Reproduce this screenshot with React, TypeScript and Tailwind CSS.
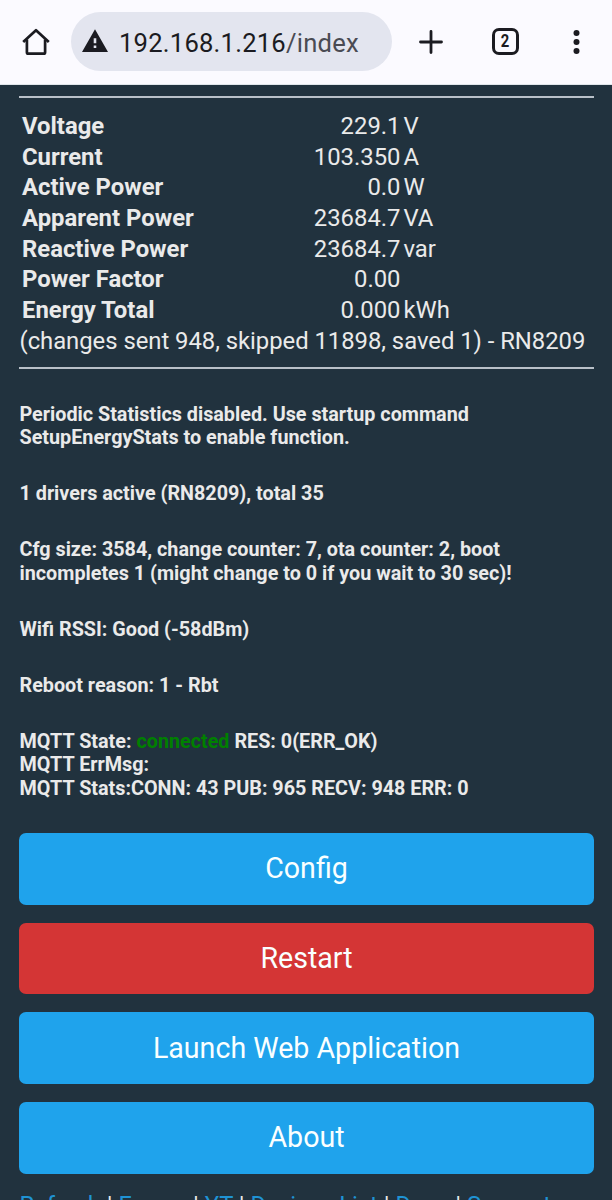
import { Fragment } from 'react';
import clsx from 'clsx';

const readings = [
  { label: 'Voltage', value: '229.1', unit: 'V' },
  { label: 'Current', value: '103.350', unit: 'A' },
  { label: 'Active Power', value: '0.0', unit: 'W' },
  { label: 'Apparent Power', value: '23684.7', unit: 'VA' },
  { label: 'Reactive Power', value: '23684.7', unit: 'var' },
  { label: 'Power Factor', value: '0.00', unit: '' },
  { label: 'Energy Total', value: '0.000', unit: 'kWh' },
];

const actions = [
  { label: 'Config', color: 'bg-[#1fa3ec]' },
  { label: 'Restart', color: 'bg-[#d43535]' },
  { label: 'Launch Web Application', color: 'bg-[#1fa3ec]' },
  { label: 'About', color: 'bg-[#1fa3ec]' },
];

const links = ['Refresh', 'Forum', 'YT', 'Devices List', 'Docs', 'Support'];

function BrowserBar() {
  return (
    <header className="flex h-[85px] shrink-0 items-center border-b border-[#dfe5ea] bg-[#fbfaff] text-[#1b1b21]">
      {/* Home */}
      <svg className="ml-[22px] h-7 w-7 shrink-0" viewBox="0 0 28 28" fill="none" stroke="currentColor" strokeWidth="2.7" strokeLinejoin="round">
        <path d="M1.2 14.1 L14 2.2 L26.8 14.1" />
        <path d="M4.9 11.5 V24.2 Q4.9 25.7 6.4 25.7 H21.6 Q23.1 25.7 23.1 24.2 V11.5" />
      </svg>

      {/* Address */}
      <div className="mb-[1px] ml-[21px] flex h-[59px] w-[321px] shrink-0 items-center rounded-full bg-[#e3e5ef] pl-[11px]">
        <svg className="mb-[2px] h-6 w-[26px] shrink-0" viewBox="0 0 26 24" fill="currentColor">
          <path fillRule="evenodd" d="M13 .2 L26 23 H0 Z M11.7 9.2 V14.3 H14.3 V9.2 Z M11.7 16.4 V19 H14.3 V16.4 Z" />
        </svg>
        <span className="mt-[2px] ml-[11px] text-[25.6px] leading-[30px] tracking-[0.22px] whitespace-nowrap">
          192.168.1.216<span className="text-[#4a4b53]">/index</span>
        </span>
      </div>

      {/* New tab */}
      <svg className="ml-[27px] h-6 w-6 shrink-0" viewBox="0 0 24 24" stroke="currentColor" strokeWidth="2.8" strokeLinecap="round">
        <path d="M12 1.5 V22.5 M1.5 12 H22.5" />
      </svg>

      {/* Open tabs */}
      <div className="mb-[1px] ml-[48.5px] flex h-[27px] w-[27px] shrink-0 items-center justify-center rounded-[7px] border-3 border-current text-[17.5px] leading-none font-bold">
        <span className="scale-x-[.85]">2</span>
      </div>

      {/* Menu */}
      <svg className="mb-[1px] ml-[54.5px] h-6 w-2 shrink-0" viewBox="0 0 8 24" fill="currentColor">
        <circle cx="3.5" cy="3" r="3" />
        <circle cx="3.5" cy="12" r="3" />
        <circle cx="3.5" cy="21" r="3" />
      </svg>
    </header>
  );
}

function Divider() {
  return <div className="h-[2px] bg-[#b9c0c8]" />;
}

export default function App() {
  return (
    <div className="flex h-[1200px] w-[612px] flex-col overflow-hidden bg-[#21323e] font-['Roboto',sans-serif] text-[#eaeaea]">
      <BrowserBar />

      <main className="pt-[11px] pr-[18px] pl-[19px]">
        <Divider />

        <div className="mt-[13px] text-[23.85px] leading-[30.65px]">
          {readings.map(r => (
            <div key={r.label} className="grid grid-cols-[264px_111.5px_1fr] gap-x-[3px] pl-[3px]">
              <span className="font-bold">{r.label}</span>
              <span className="text-right">{r.value}</span>
              <span>{r.unit}</span>
            </div>
          ))}
          <p className="pl-[0.5px] tracking-[-0.03px] whitespace-nowrap">(changes sent 948, skipped 11898, saved 1) - RN8209</p>
        </div>

        <div className="mt-[10.5px]">
          <Divider />
        </div>

        {/* Device status */}
        <div className="mt-[33.9px] flex flex-col gap-[32.9px] pl-[0.5px] text-[19.77px] leading-[23.3px] font-bold">
          <p>
            Periodic Statistics disabled. Use startup command
            <br />
            SetupEnergyStats to enable function.
          </p>
          <p>1 drivers active (RN8209), total 35</p>
          <p>
            Cfg size: 3584, change counter: 7, ota counter: 2, boot
            <br />
            incompletes 1 (might change to 0 if you wait to 30 sec)!
          </p>
          <p>Wifi RSSI: Good (-58dBm)</p>
          <p>Reboot reason: 1 - Rbt</p>
          <p>
            MQTT State: <span className="text-[#008000]">connected</span> RES: 0(ERR_OK)
            <br />
            MQTT ErrMsg:
            <br />
            MQTT Stats:CONN: 43 PUB: 965 RECV: 948 ERR: 0
          </p>
        </div>

        {/* Actions */}
        <div className="mt-[32.8px] flex flex-col gap-[17.9px]">
          {actions.map(a => (
            <button key={a.label} className={clsx('h-[71.8px] rounded-[7px] text-[28.6px] leading-[71px] text-[#faffff]', a.color)}>
              {a.label}
            </button>
          ))}
        </div>

        <p className="mt-[16px] pl-[0.5px] text-[23.8px] leading-[30px] whitespace-nowrap">
          {links.map((link, i) => (
            <Fragment key={link}>
              {i > 0 && ' | '}
              <a className="text-[#1f93d4]">{link}</a>
            </Fragment>
          ))}
        </p>
      </main>
    </div>
  );
}
